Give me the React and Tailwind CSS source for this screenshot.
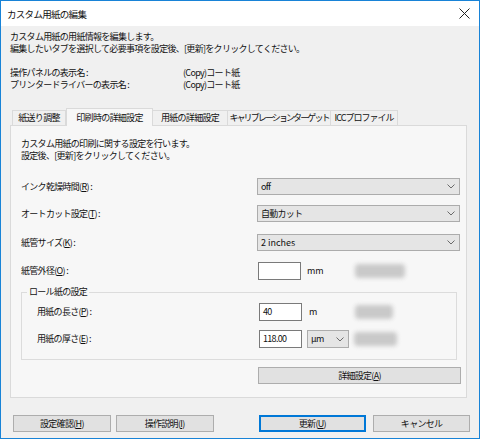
import React from "react";

const F = { fontFamily: '"Noto Sans CJK JP", "Noto Sans", sans-serif' };

function Chevron() {
  return (
    <svg width="8" height="5" viewBox="0 0 8 5" className="shrink-0">
      <path d="M0.5 0.5 L4 4 L7.5 0.5" fill="none" stroke="#6a6a6a" strokeWidth="1" />
    </svg>
  );
}

function U({ children }) {
  return <span className="underline underline-offset-1">{children}</span>;
}

function Select({ value, className = "" }) {
  return (
    <div className={"h-[17px] border border-[#acacac] bg-[#e5e5e5] flex items-center justify-between pl-[3px] pr-[4px] " + className}>
      <span>{value}</span>
      <Chevron />
    </div>
  );
}

function Input({ value }) {
  return (
    <div className="w-[43px] h-[18px] border border-[#7a7a7a] bg-white flex items-center pl-[3px]">{value}</div>
  );
}

function Blur({ w }) {
  return <div className={"h-[14px] bg-[#c9c9c9] blur-[2px] rounded-sm " + w} />;
}

function Btn({ children, def, className = "" }) {
  return (
    <div className={"h-[17px] flex items-center justify-center bg-[#e1e1e1] border " + (def ? "border-[#0078d7] border-2" : "border-[#adadad]") + " " + className}>
      {children}
    </div>
  );
}

export default function App() {
  return (
    <div style={F} className="w-[480px] h-[439px] border border-[#1883d7] bg-[#f0f0f0] flex flex-col text-[9px] tracking-[-0.7px] text-[#111] leading-[12px] overflow-hidden whitespace-nowrap">
      <div className="h-[25px] bg-white flex items-center justify-between pl-[6px] pr-[9px] shrink-0">
        <span className="text-[9.5px]">カスタム用紙の編集</span>
        <svg width="11" height="11" viewBox="0 0 11 11">
          <path d="M0.5 0.5 L10.5 10.5 M10.5 0.5 L0.5 10.5" stroke="#222" strokeWidth="1" />
        </svg>
      </div>
      <div className="flex flex-col px-[9px] pt-[5px]">
        <div>カスタム用紙の用紙情報を編集します。</div>
        <div>編集したいタブを選択して必要事項を設定後、[更新]をクリックしてください。</div>
        <div className="mt-[12px] grid grid-cols-[173px_1fr]">
          <div>操作パネルの表示名 :</div>
          <div>(Copy)コート紙</div>
          <div>プリンタードライバーの表示名 :</div>
          <div>(Copy)コート紙</div>
        </div>
        <div className="mt-[16px] flex items-end pl-[2px] h-[18px]">
          <div className="h-[15px] w-[54px] justify-center flex items-center border border-b-0 border-[#dadada] bg-[#f0f0f0]">紙送り調整</div>
          <div className="h-[18px] w-[87px] justify-center flex items-center border border-b-0 border-[#dadada] bg-[#f7f7f7] -mb-px relative z-10">印刷時の詳細設定</div>
          <div className="h-[15px] w-[75px] justify-center flex items-center border border-b-0 border-l-0 border-[#dadada] bg-[#f0f0f0]">用紙の詳細設定</div>
          <div className="h-[15px] w-[103px] justify-center flex items-center border border-b-0 border-l-0 border-[#dadada] bg-[#f0f0f0] tracking-[-1.9px]">キャリブレーションターゲット</div>
          <div className="h-[15px] w-[67px] justify-center flex items-center border border-b-0 border-l-0 border-[#dadada] bg-[#f0f0f0] tracking-[-1px]">ICCプロファイル</div>
        </div>
        <div className="h-[273px] mr-[3px] border border-[#dadada] bg-[#f7f7f7] flex flex-col pl-[10px] pr-[6px] pt-[12px]">
          <div>カスタム用紙の印刷に関する設定を行います。</div>
          <div>設定後、[更新]をクリックしてください。</div>
          <div className="mt-[16px] flex items-center h-[17px]">
            <div className="w-[237px]">インク乾燥時間(<U>R</U>) :</div>
            <Select value="off" className="w-[204px]" />
          </div>
          <div className="mt-[10px] flex items-center h-[17px]">
            <div className="w-[237px]">オートカット設定(<U>T</U>) :</div>
            <Select value="自動カット" className="w-[204px]" />
          </div>
          <div className="mt-[12px] flex items-center h-[17px]">
            <div className="w-[237px]">紙管サイズ(<U>K</U>) :</div>
            <Select value="2 inches" className="w-[204px] tracking-normal" />
          </div>
          <div className="mt-[11px] flex items-center h-[18px]">
            <div className="w-[237px]">紙管外径(<U>O</U>) :</div>
            <Input value="" />
            <span className="ml-[6px] w-[48px] tracking-normal">mm</span>
            <Blur w="w-[50px]" />
          </div>
          <div className="mt-[12px] relative border border-[#dcdcdc] h-[68px] mr-[3px] flex flex-col pl-[15px] pt-[10px]">
            <span className="absolute -top-[7px] left-[5px] px-[2px] bg-[#f7f7f7]">ロール紙の設定</span>
            <div className="flex items-center h-[18px]">
              <div className="w-[222px]">用紙の長さ(<U>P</U>) :</div>
              <Input value="40" />
              <span className="ml-[7px] w-[46px]">m</span>
              <Blur w="w-[38px]" />
            </div>
            <div className="mt-[9px] flex items-center h-[18px]">
              <div className="w-[222px]">用紙の厚さ(<U>E</U>) :</div>
              <Input value="118.00" />
              <Select value="μm" className="ml-[5px] w-[42px] h-[18px]" />
              <div className="ml-[5px]"><Blur w="w-[43px]" /></div>
            </div>
          </div>
          <div className="mt-[7px] pl-[237px]">
            <Btn className="w-[203px]">詳細設定(<U>A</U>)</Btn>
          </div>
        </div>
        <div className="mt-[17px] flex pl-[3px]">
          <Btn className="w-[98px]">設定確認(<U>H</U>)</Btn>
          <Btn className="w-[98px] ml-[5px]">操作説明(<U>I</U>)</Btn>
          <Btn def className="w-[108px] ml-[45px]">更新(<U>U</U>)</Btn>
          <Btn className="w-[97px] ml-[7px]">キャンセル</Btn>
        </div>
      </div>
    </div>
  );
}
